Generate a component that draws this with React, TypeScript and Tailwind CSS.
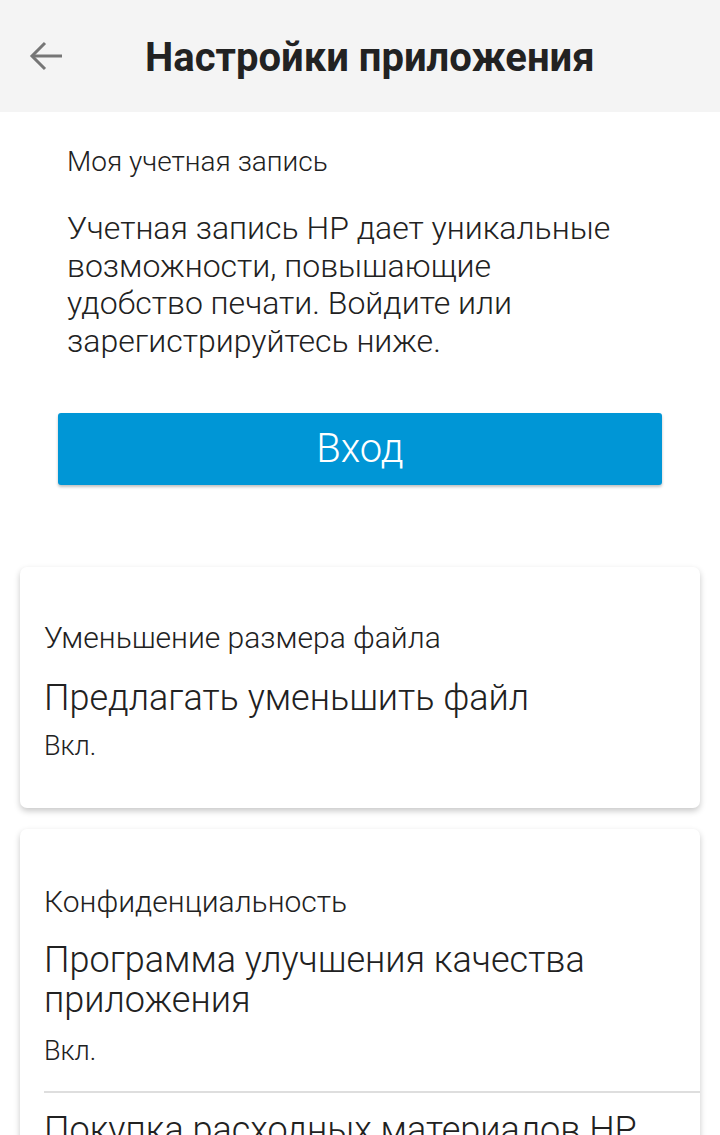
import React from "react";

export default function App() {
  return (
    <div className="w-[720px] h-[1135px] overflow-hidden bg-white text-[#212121]" style={{ fontFamily: "Roboto, 'Noto Sans', sans-serif" }}>
      <header className="h-[112px] bg-[#f4f4f4] flex items-center">
        <div className="w-[145px] pl-[22px] flex items-center">
          <svg width="48" height="48" viewBox="0 0 24 24" fill="none" stroke="#767676" strokeWidth="1.5" strokeLinecap="butt">
            <path d="M20 12H5" />
            <path d="M11.5 5.5L5 12l6.5 6.5" />
          </svg>
        </div>
        <h1 className="pt-[4px] text-[40px] font-bold text-[#222] leading-none">Настройки приложения</h1>
      </header>

      <section className="pl-[67px] pt-[36px]">
        <div className="text-[28px] font-light leading-[28px]">Моя учетная запись</div>
        <p className="mt-[34px] w-[555px] text-[32px] font-light leading-[37.5px]">
          Учетная запись HP дает уникальные возможности, повышающие удобство печати. Войдите или зарегистрируйтесь ниже.
        </p>
      </section>

      <div className="px-[58px] mt-[53px]">
        <button className="w-full h-[72px] bg-[#0096d6] rounded-[3px] shadow-[0_2px_3px_rgba(0,0,0,0.25)] text-white text-[40px] font-light flex items-center justify-center">
          Вход
        </button>
      </div>

      <div className="px-[20px] mt-[82px] flex flex-col gap-[21px]">
        <div className="bg-white rounded-[7px] shadow-[0_3px_6px_rgba(0,0,0,0.22)] pl-[24px] pt-[53px] pb-[46px]">
          <div className="text-[30px] font-light leading-[36px]">Уменьшение размера файла</div>
          <div className="mt-[22px] text-[36px] font-light leading-[40px]">Предлагать уменьшить файл</div>
          <div className="mt-[12px] text-[27px] font-light leading-[32px]">Вкл.</div>
        </div>

        <div className="bg-white rounded-[7px] shadow-[0_3px_6px_rgba(0,0,0,0.22)] pl-[24px] pt-[55px]">
          <div className="text-[30px] font-light leading-[36px]">Конфиденциальность</div>
          <div className="mt-[20px] text-[36px] font-light leading-[40px]">Программа улучшения качества приложения</div>
          <div className="mt-[15px] text-[27px] font-light leading-[32px]">Вкл.</div>
          <div className="mt-[24px] h-[2px] bg-[#dedede]" />
          <div className="mt-[17px] text-[36px] font-light leading-[40px] whitespace-nowrap">Покупка расходных материалов HP</div>
          <div className="h-[60px]" />
        </div>
      </div>
    </div>
  );
}
